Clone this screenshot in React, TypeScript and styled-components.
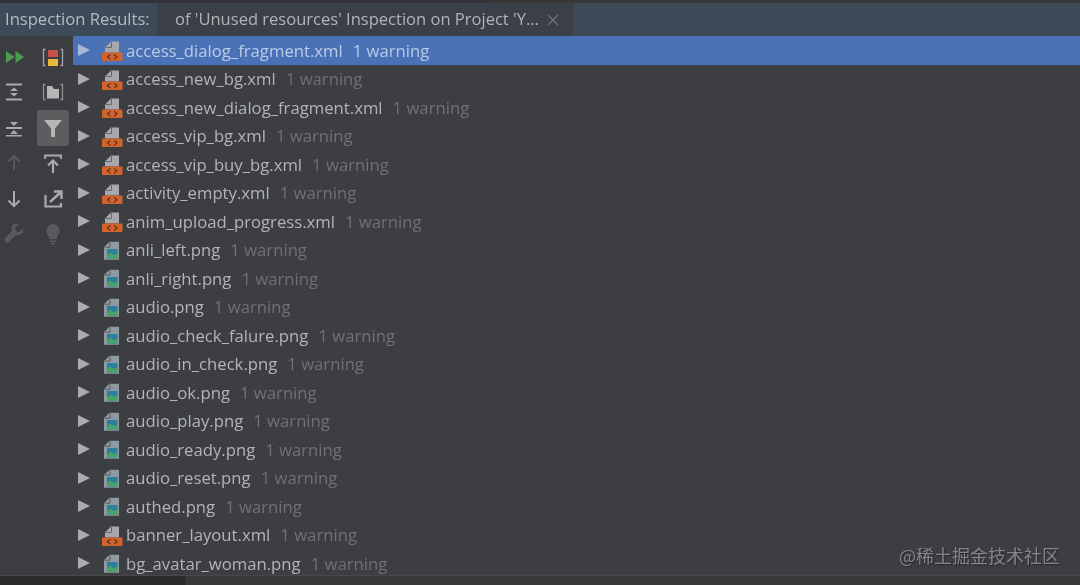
import React from 'react';
import styled, { createGlobalStyle } from 'styled-components';

const Global = createGlobalStyle`
  html, body { margin: 0; padding: 0; background: #3c3e41; }
  #root { width: 1080px; height: 585px; }
`;

const Page = styled.div`
  position: relative;
  width: 1080px;
  height: 585px;
  overflow: hidden;
  display: flex;
  flex-direction: column;
  background: #3c3e41;
  font-family: "Open Sans", "Noto Sans", sans-serif;
  filter: blur(0.4px);
`;
const TopEdge = styled.div`
  height: 3px;
  flex: none;
  background: linear-gradient(90deg, #35323a 0 490px, #3a3739 490px);
`;
const TabBar = styled.div`
  height: 33px;
  flex: none;
  display: flex;
  background: #3d4956;
`;
const TabLabel = styled.div`
  width: 157px;
  padding: 0 0 2px 5px;
  box-sizing: border-box;
  display: flex;
  align-items: center;
  font-size: 16.6px;
  color: #b3bcc5;
  background: #3d4b59;
`;
const ActiveTab = styled.div`
  width: 416px;
  padding: 0 0 2px 18px;
  box-sizing: border-box;
  display: flex;
  align-items: center;
  font-size: 16.55px;
  color: #b1b4b6;
  background: #3a3f48;
`;
const TabClose = styled.svg`
  width: 12px;
  height: 12px;
  margin: 2px 0 0 8px;
`;
const Body = styled.div`
  flex: 1;
  display: flex;
  min-height: 0;
`;
const Toolbars = styled.div`
  width: 73px;
  flex: none;
  padding-top: 3px;
  box-sizing: border-box;
  display: grid;
  grid-template-columns: 28px 32px;
  column-gap: 9px;
  grid-auto-rows: 35.5px;
  background: #3c3d40;
`;
const ToolSlot = styled.div<{ $on?: boolean }>`
  display: flex;
  align-items: center;
  justify-content: center;
  border-radius: 3px;
  background: ${p => (p.$on ? '#5b5d5f' : 'transparent')};
`;
const Tree = styled.div`
  flex: 1;
  min-width: 0;
  overflow: hidden;
`;
const Row = styled.div<{ $selected?: boolean }>`
  height: 28.5px;
  display: flex;
  align-items: center;
  padding-left: 5px;
  box-sizing: border-box;
  background: ${p => (p.$selected ? '#4a71b6' : 'transparent')};
`;
const Arrow = styled.span<{ $selected?: boolean }>`
  width: 0;
  height: 0;
  flex: none;
  border-left: 12px solid ${p => (p.$selected ? '#a5b8da' : '#a9abad')};
  border-top: 6px solid transparent;
  border-bottom: 6px solid transparent;
`;
const FileIcon = styled.svg`
  width: 21px;
  height: 22px;
  flex: none;
  margin-left: 12px;
`;
const FileName = styled.span<{ $selected?: boolean }>`
  margin-left: 3px;
  font-size: 16.7px;
  white-space: nowrap;
  color: ${p => (p.$selected ? '#bccbe6' : '#b2b4b6')};
`;
const Count = styled.span<{ $selected?: boolean }>`
  margin-left: 10px;
  font-size: 16.7px;
  white-space: nowrap;
  color: ${p => (p.$selected ? '#b6cbe8' : '#6f7174')};
`;
const BottomBar = styled.div`
  height: 10px;
  flex: none;
  border-top: 1px solid #48484b;
  box-sizing: border-box;
  background: linear-gradient(90deg, #2b2b2d 0 185px, #39393c 185px);
`;
const Watermark = styled.div`
  position: absolute;
  right: 20px;
  top: 543px;
  font-family: "Noto Sans CJK SC", "Noto Sans", sans-serif;
  font-size: 18px;
  line-height: 24px;
  color: #85868a;
  text-shadow: 1px 1px 1px #26262a;
`;

const XmlIcon = () => (
  <FileIcon viewBox="0 0 21 22">
    <path d="M9 2.500h8v11H3V8.500z" fill="#a6a8ab" />
    <path d="M9.500 3v5.500H4" fill="none" stroke="#5f6164" strokeWidth="0.900" />
    <rect x="0" y="13.500" width="20.500" height="8.500" rx="1" fill="#d4622b" />
    <path d="M8.500 15.300l-3 2.500 3 2.500M12 15.300l3 2.500-3 2.500" fill="none" stroke="#4a2f22" strokeWidth="1.100" />
  </FileIcon>
);
const PngIcon = () => (
  <FileIcon viewBox="0 0 21 22">
    <path d="M7.500 2.750H17v18H2V8z" fill="#8d9aa1" />
    <path d="M8 3.200v5H2.500" fill="none" stroke="#505356" strokeWidth="0.900" />
    <rect x="5" y="10" width="10.500" height="9.500" fill="#2b7f9c" />
    <path d="M5 19.500v-3l3.500-3 3 2.500 4-1.500v5z" fill="#4ba269" />
  </FileIcon>
);

const stroke = '#a9abad';
const Icon = styled.svg`
  width: 22px;
  height: 22px;
  display: block;
`;
const RunIcon = () => (
  <Icon viewBox="0 0 22 22"><path d="M3 5l8.500 6L3 17zM12.500 5l8.500 6-8.500 6z" fill="#4a9e4f" /></Icon>
);
const GroupSeverity = () => (
  <Icon viewBox="0 0 22 22">
    <path d="M3.500 3.500H1.500v16h2M18.500 3.500h2v16h-2" fill="none" stroke="#a3a5a7" strokeWidth="1.300" />
    <rect x="6" y="4" width="10" height="7" fill="#c9504c" />
    <rect x="6" y="13" width="10" height="7" fill="#e6b93a" />
  </Icon>
);
const GroupDir = () => (
  <Icon viewBox="0 0 22 22">
    <path d="M3.500 3.500H1.500v15h2M18.500 3.500h2v15h-2" fill="none" stroke="#8e9092" strokeWidth="1.300" />
    <path d="M5 5h5l2 3h5v9.500H5z" fill="#b3b5b7" />
  </Icon>
);
const ExpandIcon = () => (
  <Icon viewBox="0 0 22 22">
    <path d="M3 2.500h16v2H3zM3 17.500h16v2H3z" fill={stroke} />
    <path d="M11 6.500l4 3.500H7zM11 15.500l4-3.500H7z" fill={stroke} />
  </Icon>
);
const CollapseIcon = () => (
  <Icon viewBox="0 0 22 22">
    <path d="M3 10h16v2H3z" fill={stroke} />
    <path d="M11 9l-4-4h8zM11 13l-4 4h8zM3 18h16v1.500H3z" fill={stroke} />
  </Icon>
);
const FilterIcon = () => (
  <Icon viewBox="0 0 22 22"><path d="M2 3h18l-7 8.500V20h-4v-8.500z" fill="#b3b5b7" /></Icon>
);
const UpIcon = () => (
  <Icon viewBox="0 0 22 22"><path d="M11 4v14M5.500 9.500L11 4l5.500 5.500" fill="none" stroke="#58595c" strokeWidth="2" /></Icon>
);
const DownIcon = () => (
  <Icon viewBox="0 0 22 22"><path d="M11 3v15M5.500 12.500L11 18l5.500-5.500" fill="none" stroke={stroke} strokeWidth="2" /></Icon>
);
const ExportUpIcon = () => (
  <Icon viewBox="0 0 22 22">
    <path d="M3 7V3.500h16V7" fill="none" stroke={stroke} strokeWidth="1.800" />
    <path d="M11 21V9M6 13.500l5-5 5 5" fill="none" stroke={stroke} strokeWidth="2.200" />
  </Icon>
);
const ExternalIcon = () => (
  <Icon viewBox="0 0 22 22">
    <path d="M3.500 7v11.500H19V15" fill="none" stroke={stroke} strokeWidth="2.200" />
    <path d="M8 14L19 4M12 3.500h7.500V11" fill="none" stroke={stroke} strokeWidth="2.400" />
  </Icon>
);
const WrenchIcon = () => (
  <Icon viewBox="0 0 22 22"><path d="M20 5l-4 4-3-1-1-3 4-4c-3-1-6 0-7 2-1 2-1 4 0 5L2 15c-1 1-1 3 0 4s3 1 4 0l7-7c2 1 4 0 5-1 2-1 3-4 2-6z" fill="#58595c" /></Icon>
);
const BulbIcon = () => (
  <Icon viewBox="0 0 22 22"><path d="M11 1a7 7 0 0 0-4 12.500V16h8v-2.500A7 7 0 0 0 11 1zM7.500 17.500h7V19h-7zM9 20h4v1.500H9z" fill="#58595c" /></Icon>
);

const files = [
  'access_dialog_fragment.xml', 'access_new_bg.xml', 'access_new_dialog_fragment.xml',
  'access_vip_bg.xml', 'access_vip_buy_bg.xml', 'activity_empty.xml', 'anim_upload_progress.xml',
  'anli_left.png', 'anli_right.png', 'audio.png', 'audio_check_falure.png', 'audio_in_check.png',
  'audio_ok.png', 'audio_play.png', 'audio_ready.png', 'audio_reset.png', 'authed.png',
  'banner_layout.xml', 'bg_avatar_woman.png',
];

export default function App() {
  return (
    <Page>
      <Global />
      <TopEdge />
      <TabBar>
        <TabLabel>Inspection Results:</TabLabel>
        <ActiveTab>
          of 'Unused resources' Inspection on Project 'Y...
          <TabClose viewBox="0 0 12 12"><path d="M1 1l10 10M11 1L1 11" stroke="#6c7076" strokeWidth="1.400" /></TabClose>
        </ActiveTab>
      </TabBar>
      <Body>
        <Toolbars>
          <ToolSlot><RunIcon /></ToolSlot><ToolSlot><GroupSeverity /></ToolSlot>
          <ToolSlot><ExpandIcon /></ToolSlot><ToolSlot><GroupDir /></ToolSlot>
          <ToolSlot><CollapseIcon /></ToolSlot><ToolSlot $on><FilterIcon /></ToolSlot>
          <ToolSlot><UpIcon /></ToolSlot><ToolSlot><ExportUpIcon /></ToolSlot>
          <ToolSlot><DownIcon /></ToolSlot><ToolSlot><ExternalIcon /></ToolSlot>
          <ToolSlot><WrenchIcon /></ToolSlot><ToolSlot><BulbIcon /></ToolSlot>
        </Toolbars>
        <Tree>
          {files.map((f, i) => (
            <Row key={f} $selected={i === 0}>
              <Arrow $selected={i === 0} />
              {f.endsWith('.xml') ? <XmlIcon /> : <PngIcon />}
              <FileName $selected={i === 0}>{f}</FileName>
              <Count $selected={i === 0}>1 warning</Count>
            </Row>
          ))}
        </Tree>
      </Body>
      <BottomBar />
      <Watermark>@稀土掘金技术社区</Watermark>
    </Page>
  );
}
